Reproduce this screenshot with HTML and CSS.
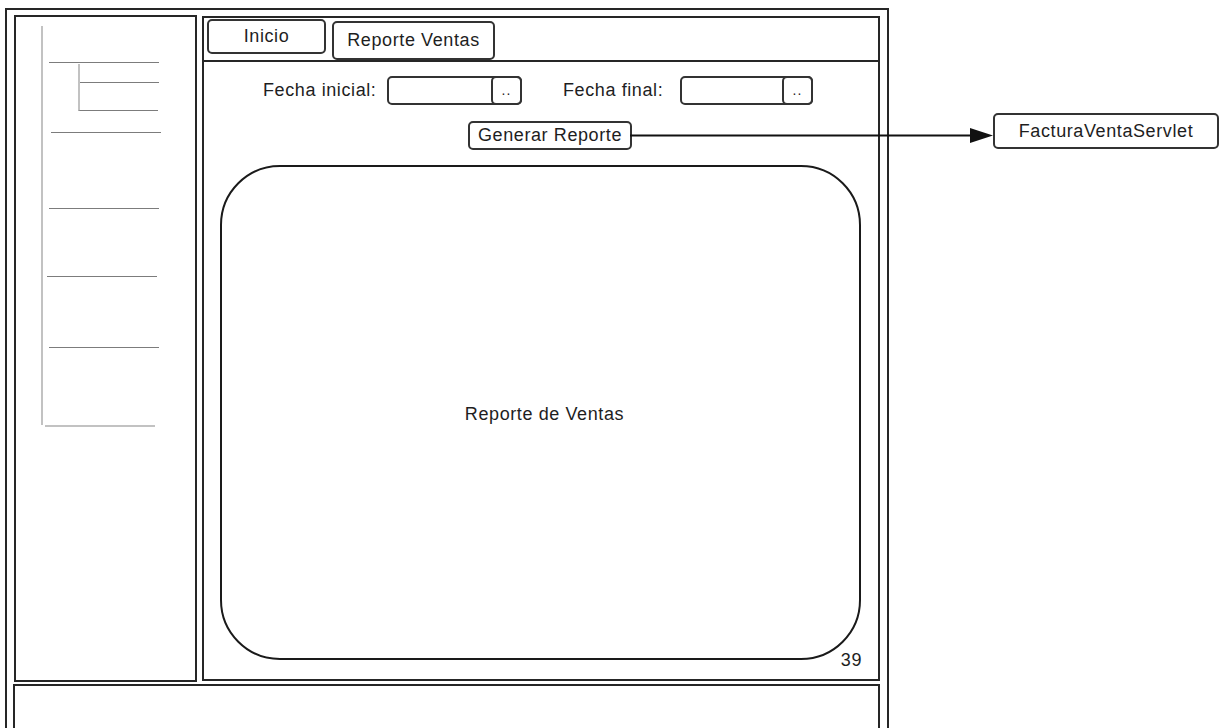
FILE: index.html
```html
<!DOCTYPE html>
<html lang="es">
<head>
<meta charset="utf-8">
<title>Reporte Ventas</title>
<link rel="stylesheet" href="styles.css">
</head>
<body>
<div class="canvas">
  <div class="frame">
    <div class="row">
      <aside class="sidebar">
        <div class="tree">
          <div class="hl l1"></div>
          <div class="sub"><div class="hl s1"></div></div>
          <div class="hl l2"></div>
          <div class="hl l3"></div>
          <div class="hl l4"></div>
          <div class="hl l5"></div>
        </div>
        <div class="tree-end"></div>
      </aside>
      <main class="panel">
        <div class="tabs">
          <div class="tab tab-inicio">Inicio</div>
          <div class="tab tab-active">Reporte Ventas</div>
        </div>
        <div class="filters">
          <span class="label label-ini">Fecha inicial:</span>
          <div class="date date-ini"><span class="date-field"></span><span class="date-btn">..</span></div>
          <span class="label label-fin">Fecha final:</span>
          <div class="date date-fin"><span class="date-field"></span><span class="date-btn">..</span></div>
        </div>
        <div class="actions">
          <div class="btn">Generar Reporte</div>
        </div>
        <div class="report">Reporte de Ventas</div>
        <span class="page-num">39</span>
      </main>
    </div>
    <div class="footer"></div>
  </div>
  <svg class="arrow" width="366" height="22" viewBox="0 0 366 22">
    <line x1="0" y1="10.5" x2="344" y2="10.5" stroke="#111" stroke-width="2"/>
    <polygon points="340,3 363,10.5 340,18" fill="#111"/>
  </svg>
  <div class="servlet">FacturaVentaServlet</div>
</div>
</body>
</html>
```
FILE: styles.css
```css
* { box-sizing: border-box; }
html, body { margin: 0; padding: 0; background: #fff; }
body {
  font-family: "Liberation Sans", Arial, sans-serif;
  font-size: 18px;
  letter-spacing: 0.6px;
  color: #1e1e1e;
  overflow: hidden;
}
.canvas {
  position: relative;
  width: 1226px;
  height: 728px;
  padding: 8px 0 0 5px;
}
.frame {
  width: 884px;
  border: 2px solid #262626;
  padding: 5px 7px 7px 7px;
}
.row {
  display: flex;
  align-items: flex-start;
  gap: 5px;
}
.sidebar {
  width: 183px;
  height: 667px;
  border: 2px solid #262626;
  display: flex;
  flex-direction: column;
  align-items: flex-start;
}
.tree {
  margin: 9px 0 0 25px;
  height: 399px;
  width: 130px;
  border-left: 2px solid #c2c2c2;
  display: flex;
  flex-direction: column;
  align-items: flex-start;
}
.hl { height: 1px; background: #7c7c7c; width: 110px; }
.l1 { margin: 36px 0 0 6px; }
.sub {
  margin: 1px 0 0 35px;
  width: 80px;
  height: 47px;
  border-left: 2px solid #c2c2c2;
  border-bottom: 1px solid #7c7c7c;
  display: flex;
  flex-direction: column;
}
.s1 { margin-top: 18px; width: 79px; }
.l2 { margin: 21px 0 0 8px; }
.l3 { margin: 75px 0 0 6px; }
.l4 { margin: 67px 0 0 4px; }
.l5 { margin: 70px 0 0 6px; }
.tree-end {
  margin-left: 29px;
  width: 110px;
  height: 2px;
  background: #c2c2c2;
}
.panel {
  position: relative;
  margin-top: 1px;
  width: 678px;
  height: 665px;
  border: 2px solid #262626;
  display: flex;
  flex-direction: column;
}
.tabs {
  display: flex;
  align-items: flex-start;
  gap: 6px;
  padding-left: 3px;
  height: 44px;
  border-bottom: 2px solid #262626;
}
.tab {
  display: flex;
  align-items: center;
  justify-content: center;
  border: 2px solid #333;
  border-radius: 5px;
}
.tab-inicio { margin-top: 1px; width: 119px; height: 35px; padding-bottom: 1px; }
.tab-active { margin-top: 3px; width: 163px; height: 39px; }
.filters {
  margin-top: 14px;
  height: 29px;
  display: flex;
  align-items: center;
  padding-left: 59px;
}
.label { display: block; white-space: nowrap; }
.label-ini { width: 124px; }
.label-fin { width: 117px; margin-left: 41px; }
.date {
  display: flex;
  height: 29px;
  border: 2px solid #333;
  border-radius: 5px;
}
.date-ini { width: 135px; }
.date-fin { width: 133px; }
.date-field { flex: 1; }
.date-btn {
  width: 31px;
  margin: -2px -2px -2px 0;
  border: 2px solid #333;
  border-radius: 5px;
  font-size: 14px;
  letter-spacing: 1px;
  display: flex;
  align-items: flex-end;
  justify-content: center;
  padding-bottom: 5px;
}
.actions {
  margin-top: 16px;
  padding-left: 264px;
}
.btn {
  width: 164px;
  height: 29px;
  border: 2px solid #333;
  border-radius: 5px;
  display: flex;
  align-items: center;
  justify-content: center;
}
.report {
  margin: 15px 17px 0 16px;
  height: 495px;
  border: 2px solid #1a1a1a;
  border-radius: 60px;
  display: flex;
  align-items: center;
  justify-content: center;
  padding: 4px 0 0 8px;
}
.page-num {
  position: absolute;
  right: 16px;
  bottom: 9px;
  line-height: 20px;
}
.footer {
  margin: 2px 0 0 -1px;
  width: 867px;
  height: 80px;
  border: 2px solid #262626;
}
.arrow {
  position: absolute;
  left: 630px;
  top: 125px;
}
.servlet {
  position: absolute;
  left: 993px;
  top: 113px;
  width: 226px;
  height: 36px;
  border: 2px solid #333;
  border-radius: 5px;
  display: flex;
  align-items: center;
  justify-content: center;
}
```
